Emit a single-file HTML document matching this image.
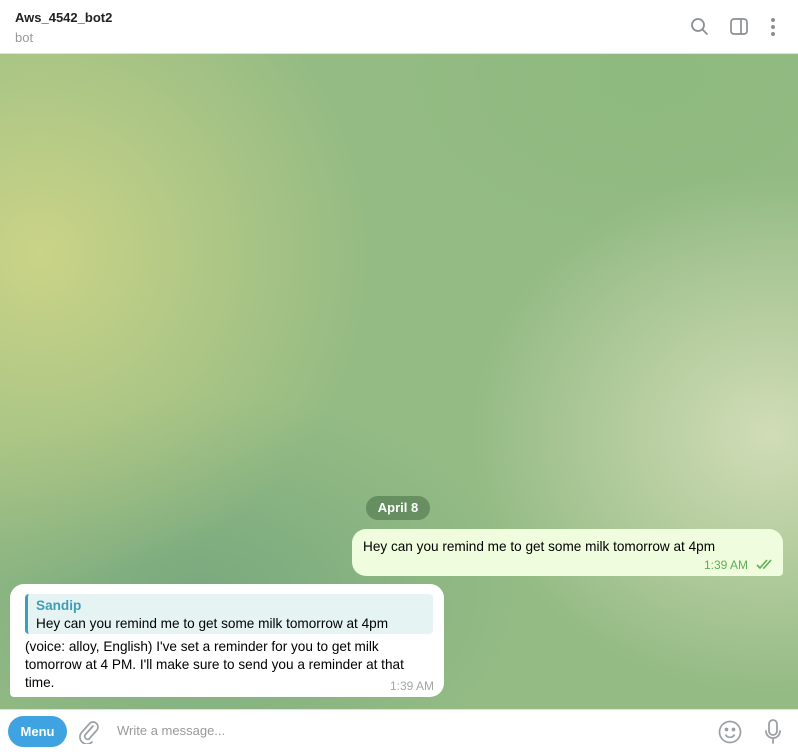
<!DOCTYPE html>
<html><head><meta charset="utf-8"><style>
*{margin:0;padding:0;box-sizing:border-box}
body{width:798px;height:755px;overflow:hidden;font-family:"Liberation Sans",sans-serif;font-size:13.6px;position:relative;background:#fff}
.hdr{position:absolute;left:0;top:0;width:798px;height:54px;background:#fff;border-bottom:1px solid #dfe3df}
.title{position:absolute;left:15px;top:10px;font-size:13px;font-weight:bold;color:#222}
.sub{position:absolute;left:15px;top:30px;font-size:13px;color:#999}
.bg{position:absolute;left:0;top:54px;width:798px;height:655px;
background:
radial-gradient(ellipse 330px 330px at 40px 200px,rgba(205,213,135,.95),rgba(205,213,135,0) 100%),
radial-gradient(ellipse 300px 260px at 770px 380px,rgba(212,222,185,.95),rgba(212,222,185,0) 100%),
radial-gradient(ellipse 320px 200px at 200px 540px,rgba(115,165,125,.8),rgba(115,165,125,0) 100%),
radial-gradient(ellipse 300px 200px at 650px 20px,rgba(140,185,125,.8),rgba(140,185,125,0) 100%),
#94bb84}
.date{position:absolute;left:366px;top:496px;width:64px;height:24px;border-radius:12px;background:rgba(90,130,85,.75);color:#fff;font-weight:bold;font-size:13px;text-align:center;line-height:24px}
.out{position:absolute;left:352px;top:529px;width:431px;height:47px;background:#effdde;border-radius:14px 14px 4px 14px}
.out .t{position:absolute;left:11px;top:10px;color:#000;white-space:nowrap}
.out .tm{position:absolute;right:35px;top:29px;color:#5dae54;font-size:12px}
.in{position:absolute;left:10px;top:584px;width:434px;height:113px;background:#fff;border-radius:14px 14px 14px 4px}
.q{position:absolute;left:15px;top:10px;width:408px;height:40px;background:#e6f3f3;border-left:3px solid #3e9eb6;border-radius:4px}
.q .n{position:absolute;left:8px;top:4px;color:#3e9eb6;font-weight:bold}
.q .m{position:absolute;left:8px;top:22px;color:#000;white-space:nowrap}
.in .b{position:absolute;left:15px;top:54px;width:390px;line-height:18px;color:#000}
.in .tm{position:absolute;right:10px;top:95px;color:#a0a8a0;font-size:12px}
.cmp{position:absolute;left:0;top:709px;width:798px;height:46px;background:#fff;border-top:1px solid #e0e0e0}
.menu{position:absolute;left:8px;top:6px;width:59px;height:31px;border-radius:16px;background:#3fa3e2;color:#fff;font-weight:bold;text-align:center;line-height:31px;font-size:13px}
.ph{position:absolute;left:117px;top:13px;color:#999;font-size:13px}
</style></head><body>
<div class="hdr"><div class="title">Aws_4542_bot2</div><div class="sub">bot</div>
<svg style="position:absolute;left:690px;top:17px" width="20" height="20" viewBox="0 0 20 20" fill="none" stroke="#8a8f94" stroke-width="1.8"><circle cx="8" cy="8" r="6"/><path d="M12.5 12.5l5 5"/></svg>
<svg style="position:absolute;left:730px;top:18px" width="18" height="17" viewBox="0 0 18 17" fill="none" stroke="#8a8f94" stroke-width="1.7"><rect x="1" y="1" width="16" height="15" rx="3"/><path d="M11 1v15"/></svg>
<svg style="position:absolute;left:770px;top:17px" width="6" height="20" viewBox="0 0 6 20" fill="#8a8f94"><circle cx="3" cy="3" r="2"/><circle cx="3" cy="10" r="2"/><circle cx="3" cy="17" r="2"/></svg>
</div>
<div class="bg"></div>
<div class="date">April 8</div>
<div class="out"><div class="t">Hey can you remind me to get some milk tomorrow at 4pm</div><div class="tm">1:39 AM</div>
<svg style="position:absolute;right:9px;top:30px" width="18" height="11" viewBox="0 0 18 11" fill="none" stroke="#5dae54" stroke-width="1.6"><path d="M1 6l3 3 7-8M7 9l1 0 7-8"/></svg></div>
<div class="in"><div class="q"><div class="n">Sandip</div><div class="m">Hey can you remind me to get some milk tomorrow at 4pm</div></div>
<div class="b">(voice: alloy, English) I've set a reminder for you to get milk tomorrow at 4 PM. I'll make sure to send you a reminder at that time.</div><div class="tm">1:39 AM</div></div>
<div class="cmp"><div class="menu">Menu</div>
<svg style="position:absolute;left:78px;top:10px" width="22" height="24" viewBox="0 0 22 24" fill="none" stroke="#9aa0a5" stroke-width="1.7" stroke-linecap="round"><path d="M15 6L7 15a3 3 0 0 0 4 4l8-9a5 5 0 0 0-7-7L4 12a7 7 0 0 0 10 10"/></svg>
<div class="ph">Write a message...</div>
<svg style="position:absolute;left:718px;top:10px" width="24" height="24" viewBox="0 0 24 24" fill="none" stroke="#9aa0a5" stroke-width="1.7"><circle cx="12" cy="12" r="10.5"/><circle cx="8.5" cy="9.5" r="1" fill="#9aa0a5"/><circle cx="15.5" cy="9.5" r="1" fill="#9aa0a5"/><path d="M7.5 14.5a5 5 0 0 0 9 0"/></svg>
<svg style="position:absolute;left:764px;top:9px" width="18" height="26" viewBox="0 0 18 26" fill="none" stroke="#9aa0a5" stroke-width="1.8" stroke-linecap="round"><rect x="5" y="1" width="8" height="15" rx="4"/><path d="M2 12a7 7 0 0 0 14 0M9 19v5"/></svg>
</div>
</body></html>
